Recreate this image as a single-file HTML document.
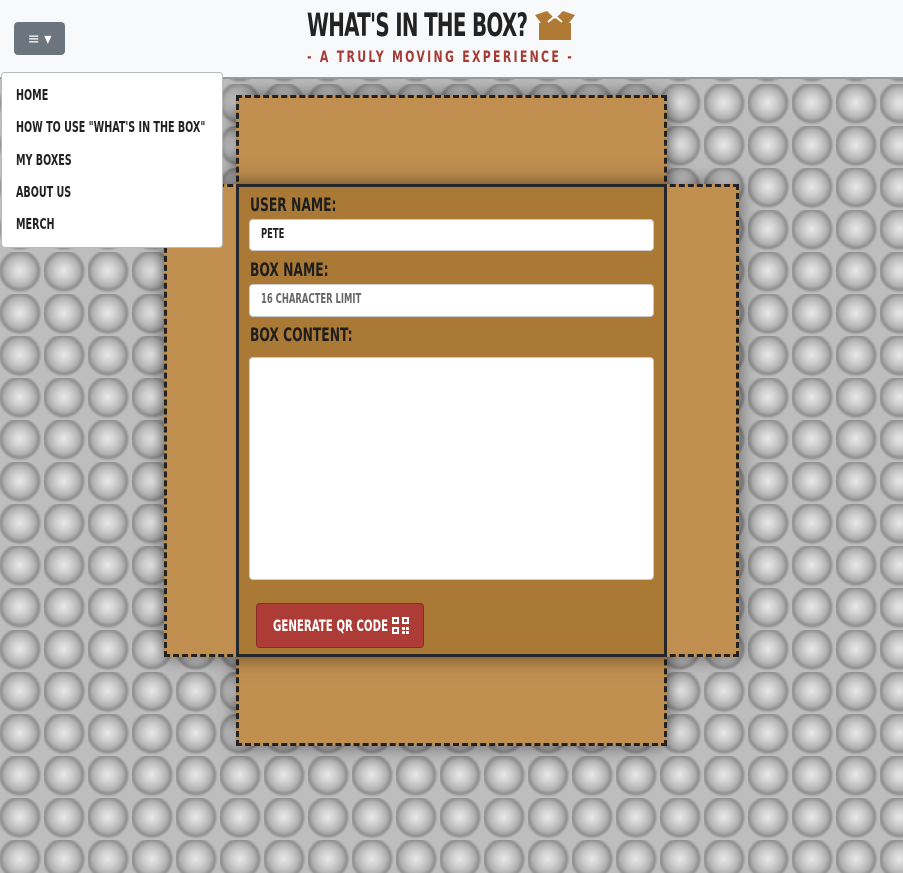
<!DOCTYPE html>
<html><head><style>
*{box-sizing:border-box;margin:0;padding:0}
body{width:903px;height:873px;overflow:hidden;position:relative;font-family:"Liberation Sans Narrow","DejaVu Sans Condensed","Liberation Sans",sans-serif;background-color:#b4b4b4;
background-image:radial-gradient(circle at 45% 45%,#e8e8e8 0,#cfcfcf 8px,#b2b2b2 15px,#8f8f8f 19px,#bdbdbd 22px);background-size:44px 42px}
header{position:absolute;left:0;top:0;width:903px;height:79px;background:#f8f9fa;border-bottom:2px solid #999}
.tog{position:absolute;left:14px;top:22px;width:51px;height:33px;background:#6c757d;border-radius:4px;color:#fff;font-size:16px;text-align:center;line-height:33px}
h1{position:absolute;left:307px;top:6px;font-size:32px;font-weight:bold;color:#222;letter-spacing:-1px;transform:scaleX(.69);transform-origin:left;white-space:nowrap}
.box{position:absolute;left:535px;top:11px}
.sub{position:absolute;left:307px;top:47px;font-size:16px;font-weight:bold;color:#a63c36;letter-spacing:3px;transform:scaleX(.76);transform-origin:left;white-space:nowrap}
.menu{position:absolute;left:1px;top:72px;width:222px;height:176px;background:#fff;border:1px solid #bbb;border-radius:4px;padding-top:13px;z-index:5}
.menu div{font-size:15px;font-weight:bold;color:#222;height:32.3px;padding-left:14px;transform:scaleX(.71);transform-origin:14px 0;white-space:nowrap}
.v{position:absolute;left:236px;top:95px;width:431px;height:651px;background:#c08e4f;border:3px dashed #222;box-shadow:0 0 18px rgba(0,0,0,.5)}
.h{position:absolute;left:164px;top:184px;width:575px;height:473px;background:#c08e4f;border:3px dashed #222;box-shadow:0 0 18px rgba(0,0,0,.5)}
.c{position:absolute;left:236px;top:184px;width:431px;height:473px;background:#a97935;border:3px solid #23272b}
label{position:absolute;left:11px;font-size:19px;font-weight:bold;color:#1e1e1e;transform:scaleX(.72);transform-origin:left;white-space:nowrap}
.in{position:absolute;left:10px;width:405px;background:#fff;border:1px solid #ccc;border-radius:4px;font-size:13px;font-weight:bold;padding-left:11px;line-height:30px}
.in span{display:inline-block;transform:scaleX(.72);transform-origin:left;white-space:nowrap}
.btn{position:absolute;left:17px;top:416px;width:168px;height:45px;background:#ad3b36;border:1px solid #8a2b27;border-radius:4px;color:#fff;font-weight:bold;font-size:16px;line-height:43px;padding-left:16px;white-space:nowrap}
</style></head><body>
<div class="v"></div><div class="h"></div>
<div class="c">
<label style="top:7px">USER NAME:</label>
<div class="in" style="top:32px;height:32px;color:#222"><span>PETE</span></div>
<label style="top:72px">BOX NAME:</label>
<div class="in" style="top:97px;height:33px;color:#666"><span>16 CHARACTER LIMIT</span></div>
<label style="top:137px">BOX CONTENT:</label>
<div class="in" style="top:170px;height:223px"></div>
<div class="btn"><span style="display:inline-block;transform:scaleX(.71);transform-origin:left">GENERATE QR CODE</span>
<svg style="position:absolute;left:135px;top:13px" width="17" height="17" viewBox="0 0 17 17" fill="#fff"><path d="M0 0h7v7H0zM2 2v3h3V2zM10 0h7v7h-7zM12 2v3h3V2zM0 10h7v7H0zM2 12v3h3v-3zM10 10h3v3h-3zM14 10h3v3h-3zM10 14h3v3h-3zM14 14h3v3h-3z" fill-rule="evenodd"/></svg></div>
</div>
<header>
<div class="tog">≡ ▾</div>
<h1>WHAT'S IN THE BOX?</h1>
<svg class="box" width="40" height="30" viewBox="0 0 40 30"><path d="M4 12h32v17H4z" fill="#b07a35"/><path d="M0 4l12-4 8 8 8-8 12 4-6 8H6z" fill="#b07a35"/><path d="M13 11l7-6 7 6" stroke="#f8f9fa" stroke-width="2" fill="none"/></svg>
<div class="sub">- A TRULY MOVING EXPERIENCE -</div>
</header>
<div class="menu"><div>HOME</div><div>HOW TO USE "WHAT'S IN THE BOX"</div><div>MY BOXES</div><div>ABOUT US</div><div>MERCH</div></div>
</body></html>
